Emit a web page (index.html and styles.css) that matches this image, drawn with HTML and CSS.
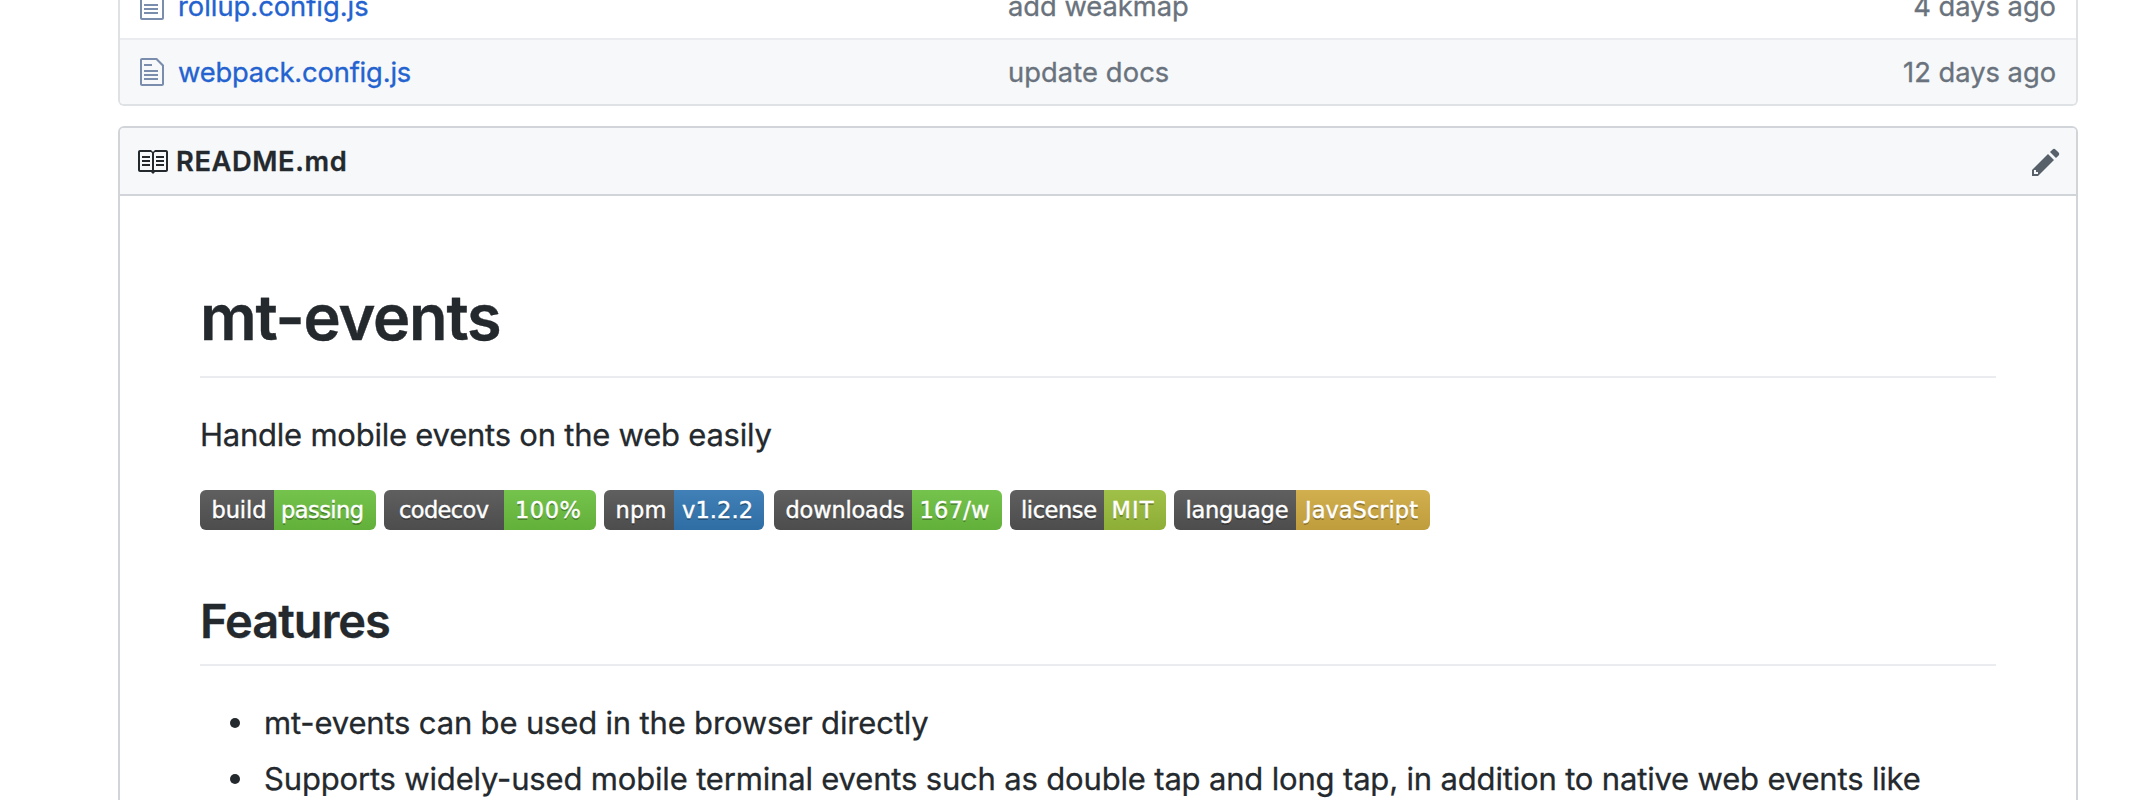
FILE: index.html
```html
<!DOCTYPE html>
<html lang="en">
<head>
<meta charset="utf-8">
<title>mt-events</title>
<link rel="stylesheet" href="styles.css">
</head>
<body>
<main class="page">
  <section class="files">
    <div class="file-row">
      <svg class="file-icon" viewBox="0 0 12 16"><path d="M6 5H2V4h4v1zM2 8h7V7H2v1zm0 2h7V9H2v1zm0 2h7v-1H2v1zm10-7.500V14c0 .55-.45 1-1 1H1c-.55 0-1-.45-1-1V2c0-.55.45-1 1-1h7.500L12 4.500zM11 5L8 2H1v12h10V5z"/></svg>
      <a class="file-name name-rollup">rollup.config.js</a>
      <span class="file-message">add weakmap</span>
      <span class="file-age">4 days ago</span>
    </div>
    <div class="file-row file-row-shaded">
      <svg class="file-icon" viewBox="0 0 12 16"><path d="M6 5H2V4h4v1zM2 8h7V7H2v1zm0 2h7V9H2v1zm0 2h7v-1H2v1zm10-7.500V14c0 .55-.45 1-1 1H1c-.55 0-1-.45-1-1V2c0-.55.45-1 1-1h7.500L12 4.500zM11 5L8 2H1v12h10V5z"/></svg>
      <a class="file-name name-webpack">webpack.config.js</a>
      <span class="file-message message-docs">update docs</span>
      <span class="file-age age-long">12 days ago</span>
    </div>
  </section>

  <section class="readme">
    <header class="readme-header">
      <svg class="book-icon" viewBox="0 0 16 16"><path d="M3 5h4v1H3V5zm0 3h4V7H3v1zm0 2h4V9H3v1zm11-5h-4v1h4V5zm0 2h-4v1h4V7zm0 2h-4v1h4V9zm2-6v9c0 .55-.45 1-1 1H9.500l-1 1-1-1H2c-.55 0-1-.45-1-1V3c0-.55.45-1 1-1h5.500l1 1 1-1H15c.55 0 1 .45 1 1zm-8 .5L7.500 3H2v9h6V3.500zm7-.5H9.500l-.5.5V12h6V3z"/></svg>
      <h3 class="readme-title">README.md</h3>
      <svg class="pencil-icon" viewBox="0 0 14 16"><path fill-rule="evenodd" d="M0 12v3h3l8-8-3-3-8 8zm3 2H1v-2h1v1h1v1zm10.300-9.300L12 6 9 3l1.300-1.300a.996.996 0 0 1 1.410 0l1.590 1.590c.39.39.39 1.020 0 1.410z"/></svg>
    </header>
    <article class="markdown">
      <h1 class="title">mt-events</h1>
      <p class="intro">Handle mobile events on the web easily</p>
      <div class="badges">
        <svg class="badge" width="176" height="40">
          <defs>
            <linearGradient id="shine" x2="0" y2="100%"><stop offset="0" stop-color="#bbb" stop-opacity=".1"/><stop offset="1" stop-opacity=".1"/></linearGradient>
          </defs>
          <path class="label-bg" d="M0 0h74v40H0z"/><path class="green" d="M74 0h102v40H74z"/><path fill="url(#shine)" d="M0 0h176v40H0z"/>
          <text class="shade" x="11.500" y="30" textLength="55">build</text><text x="11.500" y="28" textLength="55">build</text>
          <text class="shade" x="81" y="30" textLength="83">passing</text><text x="81" y="28" textLength="83">passing</text>
        </svg>
        <svg class="badge" width="212" height="40">
          <path class="label-bg" d="M0 0h120v40H0z"/><path class="green" d="M120 0h92v40h-92z"/><path fill="url(#shine)" d="M0 0h212v40H0z"/>
          <text class="shade" x="15" y="30" textLength="90">codecov</text><text x="15" y="28" textLength="90">codecov</text>
          <text class="shade" x="131" y="30" textLength="66">100%</text><text x="131" y="28" textLength="66">100%</text>
        </svg>
        <svg class="badge badge-npm" width="160" height="40">
          <path class="label-bg" d="M0 0h70v40H0z"/><path class="blue" d="M70 0h90v40H70z"/><path fill="url(#shine)" d="M0 0h160v40H0z"/>
          <text class="shade" x="11.500" y="30" textLength="51">npm</text><text x="11.500" y="28" textLength="51">npm</text>
          <text class="shade" x="78" y="30" textLength="71">v1.2.2</text><text x="78" y="28" textLength="71">v1.2.2</text>
        </svg>
        <svg class="badge" width="228" height="40">
          <path class="label-bg" d="M0 0h138v40H0z"/><path class="green" d="M138 0h90v40h-90z"/><path fill="url(#shine)" d="M0 0h228v40H0z"/>
          <text class="shade" x="11.500" y="30" textLength="119">downloads</text><text x="11.500" y="28" textLength="119">downloads</text>
          <text class="shade" x="145.500" y="30" textLength="70">167/w</text><text x="145.500" y="28" textLength="70">167/w</text>
        </svg>
        <svg class="badge" width="156" height="40">
          <path class="label-bg" d="M0 0h94v40H0z"/><path class="lime" d="M94 0h62v40H94z"/><path fill="url(#shine)" d="M0 0h156v40H0z"/>
          <text class="shade" x="11" y="30" textLength="76">license</text><text x="11" y="28" textLength="76">license</text>
          <text class="shade" x="101.500" y="30" textLength="42">MIT</text><text x="101.500" y="28" textLength="42">MIT</text>
        </svg>
        <svg class="badge" width="256" height="40">
          <path class="label-bg" d="M0 0h122v40H0z"/><path class="gold" d="M122 0h134v40H122z"/><path fill="url(#shine)" d="M0 0h256v40H0z"/>
          <text class="shade" x="11.500" y="30" textLength="103">language</text><text x="11.500" y="28" textLength="103">language</text>
          <text class="shade" x="131" y="30" textLength="113">JavaScript</text><text x="131" y="28" textLength="113">JavaScript</text>
        </svg>
      </div>
      <h2 class="subtitle">Features</h2>
      <ul class="features">
        <li>mt-events can be used in the browser directly</li>
        <li>Supports widely-used mobile terminal events such as double tap and long tap, in addition to native web events like</li>
      </ul>
    </article>
  </section>
</main>
</body>
</html>
```
FILE: styles.css
```css
* {
  box-sizing: border-box;
}

body {
  margin: 0;
  height: 800px;
  overflow: hidden;
  background: #fff;
  color: #24292e;
  font-family: Inter, "Liberation Sans", sans-serif;
}

.page {
  display: flow-root;
  width: 1960px;
  height: 800px;
  margin-left: 118px;
  overflow: hidden;
}

/* File listing, scrolled partly out of view */
.files {
  margin-top: -28px;
  border: 2px solid #dfe2e5;
  border-top: 0;
  border-radius: 0 0 6px 6px;
  overflow: hidden;
}

.file-row {
  display: grid;
  grid-template-columns: 38px 830px 1fr auto;
  align-items: center;
  height: 66px;
  padding: 0 20px;
  border-top: 2px solid #eaecef;
  color: #6a737d;
  font-size: 27.3px;
  line-height: 62px;
  -webkit-text-stroke: 0.35px;
}

.file-row-shaded {
  background: #f6f8fa;
}

.file-row a,
.file-row span {
  padding-top: 2px;
}

.file-icon {
  width: 24px;
  height: 32px;
  fill: #7a8dac;
}

.file-name {
  color: #2463cf;
}

.name-rollup {
  letter-spacing: 0;
}

.name-webpack {
  letter-spacing: -0.15px;
}

.message-docs {
  letter-spacing: 0.1px;
}

.age-long {
  letter-spacing: 0;
}

/* Readme box */
.readme {
  height: 720px;
  margin-top: 20px;
  border: 2px solid #d1d5da;
  border-radius: 6px;
}

.readme-header {
  display: flex;
  align-items: center;
  height: 68px;
  padding: 0 16px;
  border-bottom: 2px solid #d1d5da;
  border-radius: 4px 4px 0 0;
  background: #f6f8fa;
}

.book-icon {
  width: 32px;
  height: 32px;
  margin-top: 2px;
  fill: #24292e;
}

.readme-title {
  margin: 0 auto 0 8px;
  padding-top: 2px;
  font-size: 27.3px;
  font-weight: 600;
  line-height: 64px;
  letter-spacing: 0.6px;
  -webkit-text-stroke: 0.3px;
}

.pencil-icon {
  width: 28px;
  height: 32px;
  margin-top: 2px;
  fill: #586069;
}

.markdown {
  padding: 81px 80px 0;
}

.title {
  margin: 0 0 33px;
  padding-bottom: 19px;
  border-bottom: 2px solid #eaecef;
  font-size: 63px;
  font-weight: 600;
  line-height: 80px;
  letter-spacing: -1.2px;
  -webkit-text-stroke: 0.4px;
}

.intro {
  margin: 0 0 31px;
  font-size: 31px;
  line-height: 48px;
  letter-spacing: -0.23px;
  -webkit-text-stroke: 0.3px;
}

.badges {
  display: flex;
  gap: 8px;
}

.badge {
  border-radius: 6px;
  fill: #fff;
  font: 22.5px "DejaVu Sans", Verdana, sans-serif;
}

.badge text {
  stroke: #fff;
  stroke-width: 0.4px;
}

.badge-npm {
  margin-right: 2px;
}

.label-bg { fill: #555; }
.green { fill: #6dc441; }
.blue { fill: #337ab7; }
.lime { fill: #9dc13c; }
.gold { fill: #d4ae43; }

.badge .shade {
  fill: #010101;
  fill-opacity: 0.3;
  stroke: none;
}

.subtitle {
  margin: 61px 0 33px;
  padding-bottom: 13px;
  border-bottom: 2px solid #eaecef;
  font-size: 47px;
  font-weight: 600;
  line-height: 60px;
  letter-spacing: -1.02px;
  -webkit-text-stroke: 0.3px;
}

.features {
  display: grid;
  gap: 8px;
  margin: 0;
  padding: 0 0 0 30px;
  list-style: none;
  font-size: 31px;
  line-height: 48px;
  letter-spacing: -0.17px;
  white-space: nowrap;
  -webkit-text-stroke: 0.3px;
}

.features li {
  display: flex;
  align-items: center;
  gap: 24px;
}

.features li::before {
  content: "";
  width: 10px;
  height: 10px;
  border-radius: 50%;
  background: #24292e;
}
```
